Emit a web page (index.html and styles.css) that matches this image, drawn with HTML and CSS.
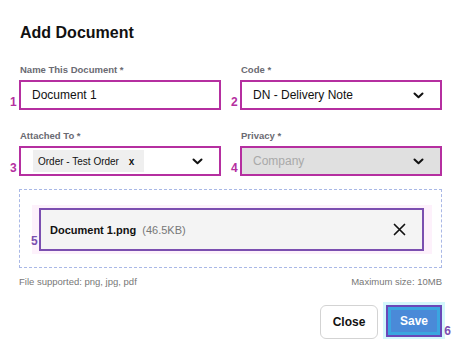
FILE: index.html
```html
<!DOCTYPE html>
<html>
<head>
    <meta charset="utf-8">
    <title>Add Document</title>
    <link rel="stylesheet" href="styles.css">
</head>
<body>
    <div class="modal">
        <h2>Add Document</h2>

        <div class="fields">
            <div class="field">
                <label>Name This Document *</label>
                <div class="box">
                    <span class="value">Document 1</span>
                    <span class="mark">1</span>
                </div>
            </div>
            <div class="field">
                <label>Code *</label>
                <div class="box">
                    <span class="value">DN - Delivery Note</span>
                    <svg class="chevron" width="11" height="7" viewBox="0 0 11 7"><path d="M1.5 1.5 L5.5 5.3 L9.5 1.5" fill="none" stroke="#111" stroke-width="2" stroke-linecap="round" stroke-linejoin="round"/></svg>
                    <span class="mark">2</span>
                </div>
            </div>
            <div class="field">
                <label>Attached To *</label>
                <div class="box tagbox">
                    <span class="tag">Order - Test Order <b>x</b></span>
                    <svg class="chevron" width="11" height="7" viewBox="0 0 11 7"><path d="M1.5 1.5 L5.5 5.3 L9.5 1.5" fill="none" stroke="#111" stroke-width="2" stroke-linecap="round" stroke-linejoin="round"/></svg>
                    <span class="mark">3</span>
                </div>
            </div>
            <div class="field">
                <label>Privacy *</label>
                <div class="box disabled">
                    <span class="value">Company</span>
                    <svg class="chevron" width="11" height="7" viewBox="0 0 11 7"><path d="M1.5 1.5 L5.5 5.3 L9.5 1.5" fill="none" stroke="#111" stroke-width="2" stroke-linecap="round" stroke-linejoin="round"/></svg>
                    <span class="mark">4</span>
                </div>
            </div>
        </div>

        <div class="dropzone">
            <div class="highlight">
                <div class="file">
                    <span><b>Document 1.png</b> <span class="size">(46.5KB)</span></span>
                    <svg width="13" height="13" viewBox="0 0 13 13"><path d="M1.5 1.5 L11.5 11.5 M11.5 1.5 L1.5 11.5" stroke="#111" stroke-width="1.7" stroke-linecap="round"/></svg>
                    <span class="mark purple">5</span>
                </div>
            </div>
        </div>
        <div class="hint">
            <span>File supported: png, jpg, pdf</span>
            <span>Maximum size: 10MB</span>
        </div>

        <div class="actions">
            <button class="close">Close</button>
            <button class="save">Save<span class="mark purple">6</span></button>
        </div>
    </div>
</body>
</html>
```

FILE: styles.css
```css
body {
    font-family: "Liberation Sans", Arial, sans-serif;
    background: #fff;
    margin: 0;
    padding: 0;
    color: #111;
}
.modal {
    padding: 23px 19px 0 19px;
}
h2 {
    font-size: 16px;
    margin: 0 0 21px 1px;
    line-height: 20px;
}
.fields {
    display: grid;
    grid-template-columns: 1fr 1fr;
    column-gap: 19px;
    row-gap: 20px;
}
label {
    display: block;
    font-size: 9.5px;
    font-weight: bold;
    color: #6a6a72;
    margin: 0 0 5px 1px;
    line-height: 11px;
}
.box {
    position: relative;
    height: 30px;
    box-sizing: border-box;
    border: 2px solid #b52fa0;
    display: flex;
    align-items: center;
    justify-content: space-between;
    padding: 0 16px 0 11px;
    font-size: 12px;
}
.tagbox {
    padding-left: 12px;
}
.disabled {
    background: #e0e0e0;
    color: #a9a9a9;
}
.chevron {
    margin-top: 1px;
}
.tag {
    background: #efefef;
    font-size: 10px;
    padding: 6px 10px 5px 5px;
    line-height: 11px;
}
.tag b {
    margin-left: 7px;
}
.mark {
    position: absolute;
    left: -11px;
    bottom: 0;
    font-size: 12px;
    font-weight: bold;
    color: #b52fa0;
    line-height: 12px;
}
.mark.purple {
    color: #7b4fb0;
}
.dropzone {
    margin-top: 13px;
    border: 1px dashed #a9b8e6;
    padding: 15px 9px 13px 12px;
}
.highlight {
    background: #fdf1fb;
    padding: 3px 8px 3px 7px;
}
.file {
    position: relative;
    height: 43px;
    box-sizing: border-box;
    border: 2px solid #7b4fb0;
    background: #f4f4f4;
    display: flex;
    align-items: center;
    justify-content: space-between;
    padding: 0 16px 0 9px;
    font-size: 11px;
}
.file .mark {
    left: -10px;
    bottom: 2px;
}
.size {
    color: #777;
    margin-left: 3px;
}
.hint {
    display: flex;
    justify-content: space-between;
    font-size: 9.5px;
    color: #777;
    margin-top: 8px;
}
.actions {
    display: flex;
    justify-content: flex-end;
    gap: 8px;
    margin-top: 18px;
}
button {
    font-family: inherit;
    font-size: 12px;
    font-weight: bold;
    height: 34px;
    border-radius: 6px;
    cursor: pointer;
}
.close {
    width: 58px;
    background: #fff;
    border: 1px solid #d3d3d3;
    color: #111;
}
.save {
    position: relative;
    width: 56px;
    height: 32px;
    border-radius: 0;
    color: #fff;
    background: #4a8ad8;
    border: 2px solid #6a48b8;
    box-shadow: inset 0 0 0 3px #3aa6e0, 0 0 0 3px #d3f7fb;
}
.save .mark {
    left: auto;
    right: -11px;
    bottom: -2px;
}
```
